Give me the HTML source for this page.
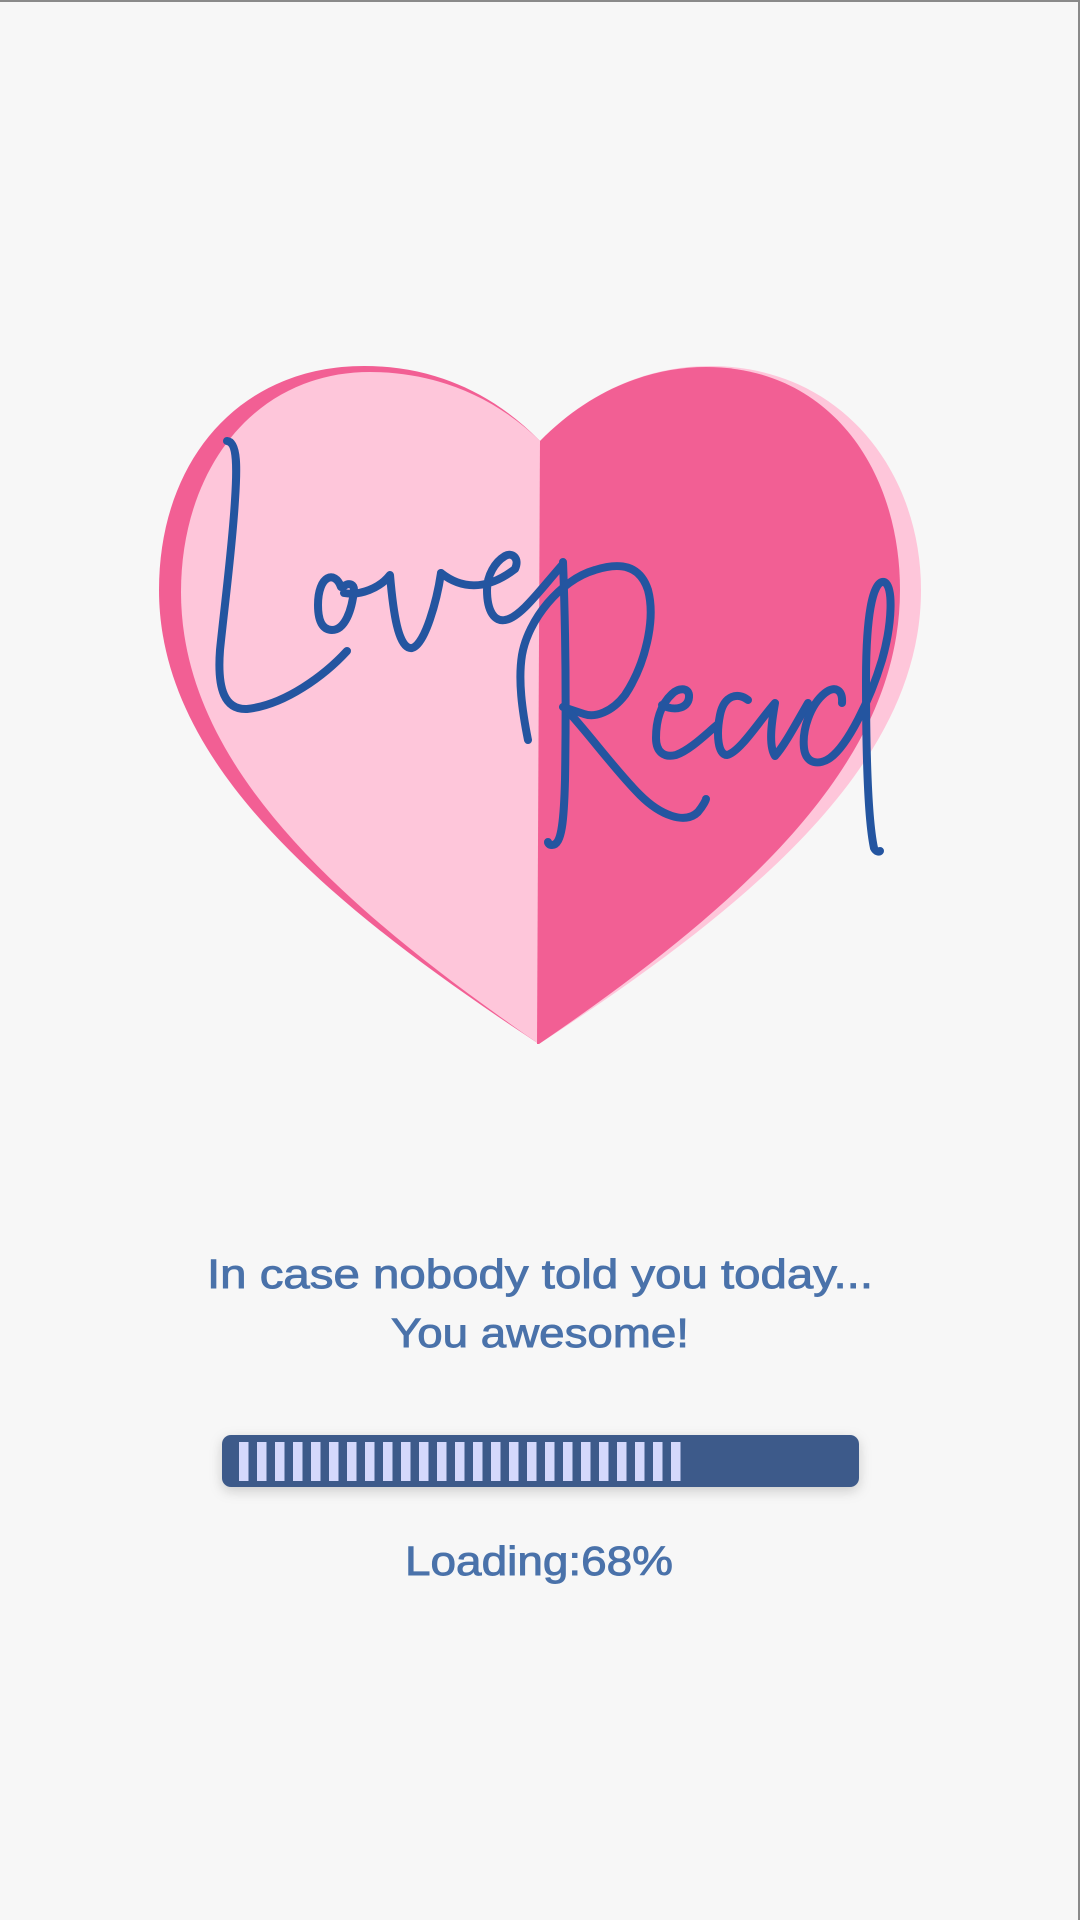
<!DOCTYPE html>
<html><head><meta charset="utf-8"><style>
html,body{margin:0;padding:0;background:#f7f7f7;}
body{width:1080px;height:1920px;overflow:hidden;position:relative;}
.b{position:absolute;inset:0;border-top:2px solid #8a8a8a;border-right:2px solid #8a8a8a;box-sizing:border-box;pointer-events:none;}
</style></head><body>
<svg width="1080" height="1920" viewBox="0 0 1080 1920" xmlns="http://www.w3.org/2000/svg" style="position:absolute;left:0;top:0">
<path d="M540,441 C490,390 430,366 364,366 C240,366 159,460 159,590 C159,760 320,900 539,1044 Z" fill="#f25f94"/>
<path d="M540,441 C590,390 650,366 710,366 C840,366 921,470 921,590 C921,760 760,900 539,1044 Z" fill="#fec6da"/>
<path d="M540,441 C492,394 432,372 370,372 C254,372 181,470 181,592 C181,760 330,900 539,1044 Z" fill="#fec6da"/>
<path d="M540,441 C590,390 650,367 706,367 C830,367 900,470 900,590 C900,760 750,900 539,1044 L537,1044 Z" fill="#f25f94"/>
<g fill="none" stroke="#2455a0" stroke-width="8" stroke-linecap="round" stroke-linejoin="round">
<path d="M227,441 C238,442 237,470 235,500 C232,550 224,610 220,650 C217,690 225,710 247,709 C285,705 325,675 347,651"/>
<path d="M341,587 C335,570 318,575 318,605 C318,625 325,630 332,630 C345,630 352,610 354,590 C354,585 350,582 344,586"/>
<path d="M344,593 C360,596 380,588 390,575 C393,610 398,650 412,648 C425,645 437,600 441,573"/>
<path d="M441,573 C460,588 485,592 515,569 C520,558 512,552 505,556 C495,562 487,575 487,590 C487,612 495,622 505,620 C520,618 540,590 563,564"/>
<path d="M563,562 C566,640 566,720 565,780 C564,820 562,845 552,845 C549,845 548,843 548,842"/>
<path d="M528,740 C522,710 518,680 522,655 C528,620 560,580 595,570 C620,562 640,565 648,590 C656,620 645,665 625,695 C612,712 595,718 584,714 L563,707"/>
<path d="M565,708 C590,735 615,770 640,795 C660,815 685,825 698,812 C703,806 706,800 706,799"/>
<path d="M662,705 C675,712 690,708 689,695 C688,687 678,688 672,694 C660,705 656,722 656,738 C656,752 664,758 676,755 C690,750 705,735 717,725"/>
<path d="M748,700 C738,692 724,695 720,715 C716,735 718,755 727,755 C740,752 760,720 775,703 C772,720 768,745 775,756 C785,745 798,720 808,703"/>
<path d="M842,703 C843,690 835,685 825,693 C810,705 802,730 804,748 C806,765 820,765 830,758 C848,745 870,700 882,660 C892,625 894,585 884,582 C872,580 866,620 866,680 C866,760 868,820 874,848 C876,852 879,852 880,851"/>
</g>
<g font-family="'Liberation Sans', sans-serif" fill="#4a72aa" stroke="#4a72aa" stroke-width="0.9" font-size="41">
<text x="540" y="1288" text-anchor="middle" textLength="666" lengthAdjust="spacingAndGlyphs">In case nobody told you today...</text>
<text x="540" y="1347" text-anchor="middle" textLength="298" lengthAdjust="spacingAndGlyphs">You awesome!</text>
<text x="539" y="1575" text-anchor="middle" textLength="268" lengthAdjust="spacingAndGlyphs">Loading:68%</text>
</g>
<defs><filter id="sh" x="-10%" y="-50%" width="120%" height="200%"><feDropShadow dx="0" dy="4" stdDeviation="6" flood-color="#000" flood-opacity="0.18"/></filter>
<pattern id="st" x="239" y="0" width="18" height="10" patternUnits="userSpaceOnUse"><rect x="0" y="0" width="9.5" height="10" fill="#d4d8fc"/></pattern></defs>
<rect x="222" y="1435" width="637" height="52" rx="9" fill="#3d5a8a" filter="url(#sh)"/>
<rect x="239" y="1442" width="442" height="39" fill="url(#st)"/>
</svg>
<div class="b"></div>
</body></html>
